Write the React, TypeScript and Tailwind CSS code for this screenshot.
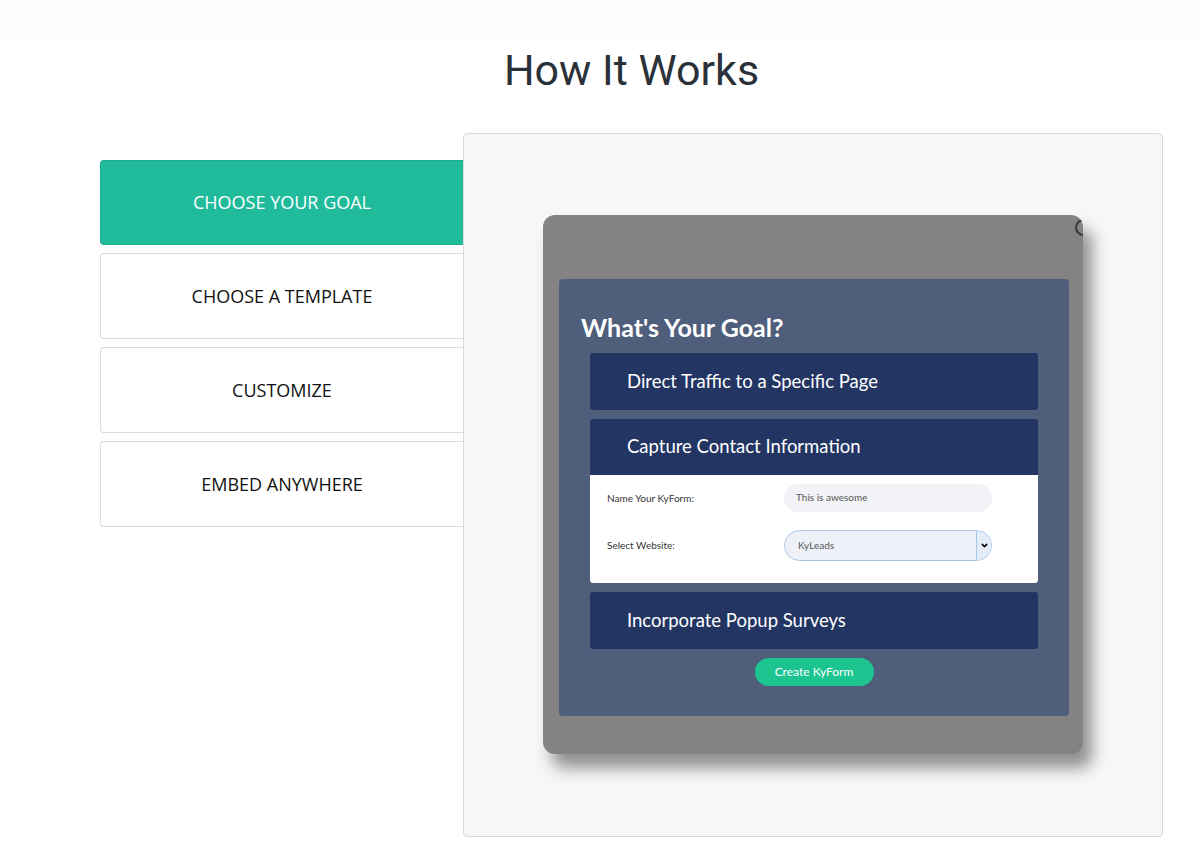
import { ChevronDown } from 'lucide-react'

const steps = ['CHOOSE YOUR GOAL', 'CHOOSE A TEMPLATE', 'CUSTOMIZE', 'EMBED ANYWHERE']

export default function App() {
  return (
    <main className="min-h-screen bg-white">
      <div className="h-[41px] bg-[#fbfcfe]" />
      <div className="ml-[100px] w-[1063px]">
        <h1
          className="mt-[8px] text-center text-[43px] leading-none text-[#2a3139]"
          style={{ fontFamily: 'Roboto, sans-serif' }}
        >
          How It Works
        </h1>
        <div className="mt-[41px] flex items-start">
          <StepTabs />
          <PreviewPanel />
        </div>
      </div>
    </main>
  )
}

const StepTabs = () => (
  <div className="mt-[27px] flex w-[363px] flex-col gap-[8px]" style={{ fontFamily: '"Open Sans", sans-serif' }}>
    {steps.map((step, i) => (
      <div
        key={step}
        className={
          i === 0
            ? 'flex h-[85px] items-center justify-center rounded-l-[4px] border border-r-0 border-[#1cad8f] bg-[#1fbb9b] text-[18px] text-white'
            : 'flex h-[86px] items-center justify-center rounded-l-[4px] border border-r-0 border-[#dcdcdc] bg-white text-[18px] text-[#111]'
        }
      >
        {step}
      </div>
    ))}
  </div>
)

const PreviewPanel = () => (
  <div className="h-[704px] w-[700px] rounded-[4px] border border-[#d9d9d9] bg-[#f7f7f7] pl-[79px] pt-[81px]">
    <GoalModal />
  </div>
)

const GoalModal = () => (
  <div
    className="relative h-[539px] w-[540px] overflow-hidden rounded-[12px] bg-[#838383] pl-[16px] pt-[64px] shadow-[9px_14px_16px_rgba(0,0,0,0.42)]"
    style={{ fontFamily: 'Lato, "Open Sans", sans-serif' }}
  >
    <div className="absolute right-[-9px] top-[4px] h-[17px] w-[17px] rounded-full border-[2px] border-[#3a3a3a]" />
    <div className="flex h-[437px] w-[510px] flex-col rounded-[4px] bg-[#4f5e7b] px-[31px]">
      <h2 className="-ml-[9px] mt-[33px] text-[25px] font-bold leading-[30px] text-white">What's Your Goal?</h2>
      <div className="mt-[11px] flex flex-col gap-[9px]">
        <GoalOption label="Direct Traffic to a Specific Page" />
        <div className="overflow-hidden rounded-[3px]">
          <GoalOption label="Capture Contact Information" flat />
          <div className="flex h-[108px] flex-col gap-[18px] bg-white pl-[17px] pt-[9px] text-[10px] text-[#333]">
            <div className="flex items-center">
              <span className="w-[177px]">Name Your KyForm:</span>
              <div className="flex h-[28px] w-[208px] items-center rounded-full bg-[#f2f3f7] pb-[2px] pl-[12px] text-[#555]">
                This is awesome
              </div>
            </div>
            <div className="flex items-center">
              <span className="w-[177px]">Select Website:</span>
              <div className="flex h-[31px] w-[208px] items-center overflow-hidden rounded-full border border-[#a8c6e6] bg-[#eef2f8] text-[#555]">
                <span className="flex-1 pl-[13px]">KyLeads</span>
                <span className="flex h-full w-[15px] items-center justify-center border-l border-[#a8c6e6] bg-[#e3ecf7]">
                  <ChevronDown className="h-[9px] w-[9px] text-black" strokeWidth={4} />
                </span>
              </div>
            </div>
          </div>
        </div>
        <GoalOption label="Incorporate Popup Surveys" />
      </div>
      <button className="mx-auto mt-[9px] h-[28px] w-[119px] rounded-full bg-[#1cc48f] text-[12px] text-white">
        Create KyForm
      </button>
    </div>
  </div>
)

const GoalOption = ({ label, flat }: { label: string; flat?: boolean }) => (
  <div
    className={
      flat
        ? 'flex h-[56px] items-center bg-[#233562] pl-[37px] text-[18.5px] text-white'
        : 'flex h-[57px] items-center rounded-[3px] bg-[#233562] pl-[37px] text-[18.5px] text-white'
    }
  >
    {label}
  </div>
)
